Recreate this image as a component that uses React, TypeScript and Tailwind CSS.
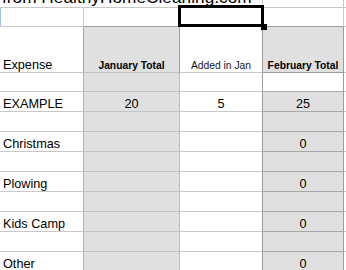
const rows = [
  { label: "", jan: "", added: "", feb: "", h: "h-[19px]", febWhite: true },
  { label: "EXAMPLE", jan: "20", added: "5", feb: "25", h: "h-5" },
  { label: "", jan: "", added: "", feb: "", h: "h-5" },
  { label: "Christmas", jan: "", added: "", feb: "0", h: "h-5" },
  { label: "", jan: "", added: "", feb: "", h: "h-5" },
  { label: "Plowing", jan: "", added: "", feb: "0", h: "h-5" },
  { label: "", jan: "", added: "", feb: "", h: "h-5" },
  { label: "Kids Camp", jan: "", added: "", feb: "0", h: "h-5" },
  { label: "", jan: "", added: "", feb: "", h: "h-5" },
  { label: "Other", jan: "", added: "", feb: "0", h: "h-5" },
];

const body = "flex items-end pb-0 text-[12.7px] leading-[14px] text-black";

export default function App() {
  return (
    <div className="relative h-[270px] w-[346px] overflow-hidden bg-white font-['Liberation_Sans',Arial,sans-serif]">
      <div className="grid grid-cols-[84px_96px_83px_81px_1fr]">
        {/* title row, text runs across the first three columns */}
        <div className="col-span-3 flex h-2 items-end overflow-visible border-r border-b border-[#c8c8c8] pb-px pl-[2px]">
          <span className="whitespace-nowrap text-[17.3px] leading-[17px] text-black">
            from HealthyHomeCleaning.com
          </span>
        </div>
        <div className="h-2 border-r border-b border-[#c8c8c8] bg-white" />
        <div className="h-2 border-b border-[#c8c8c8] bg-white" />

        {/* empty row with the selected cell */}
        <div className="h-[19px] border-r border-b border-[#c8c8c8] bg-white shadow-[inset_1px_0_0_#9fc3ee]" />
        <div className="h-[19px] border-r border-b border-r-[#c8c8c8] border-b-[#9c9c9c] bg-white" />
        <div className="h-[19px] border-r border-b border-r-[#c8c8c8] border-b-[#9c9c9c] bg-white" />
        <div className="h-[19px] border-r border-b border-r-[#c8c8c8] border-b-[#9c9c9c] bg-white" />
        <div className="h-[19px] border-b border-[#c8c8c8] bg-white" />

        {/* header row */}
        <div className={`h-[46px] border-r border-b border-r-[#a8a8a8] border-b-[#c8c8c8] bg-white pl-[3px] ${body}`}>
          Expense
        </div>
        <div className="flex h-[46px] items-end justify-center border-r border-b border-r-[#a0a0a0] border-b-[#c0c0c0] bg-[#e0e0e0] text-[10.3px] leading-[12px] font-bold text-black">
          January Total
        </div>
        <div className="flex h-[46px] items-end justify-center border-r border-b border-r-[#9c9c9c] border-b-[#c8c8c8] bg-white text-[10.3px] leading-[12px] text-[#16162a]">
          Added in Jan
        </div>
        <div className="flex h-[46px] items-end justify-center border-r border-b border-[#9c9c9c] bg-[#e0e0e0] text-[10.3px] leading-[12px] font-bold text-black">
          February Total
        </div>
        <div className="h-[46px] border-b border-[#c8c8c8] bg-white" />

        {rows.map((r, i) => (
          <div key={i} className="contents">
            <div className={`${r.h} border-r border-b border-r-[#b2b2b2] border-b-[#c8c8c8] bg-white pl-[3px] ${body}`}>
              {r.label}
            </div>
            <div className={`${r.h} justify-center border-r border-b border-r-[#bdbdbd] border-b-[#c4c4c4] bg-[#e0e0e0] ${body}`}>
              {r.jan}
            </div>
            <div className={`${r.h} justify-center border-r border-b border-r-[#9c9c9c] border-b-[#c8c8c8] bg-white ${body}`}>
              {r.added}
            </div>
            <div
              className={`${r.h} justify-center border-r border-b border-r-[#9c9c9c] border-b-[#a8a8a8] ${
                r.febWhite ? "bg-white" : "bg-[#e0e0e0]"
              } ${body}`}
            >
              {r.feb}
            </div>
            <div className={`${r.h} border-b border-[#c8c8c8] bg-white`} />
          </div>
        ))}
      </div>

      {/* active cell outline and fill handle */}
      <div className="absolute top-[5px] left-[178px] h-[22px] w-[86px] border-[3px] border-black" />
      <div className="absolute top-[24px] left-[261px] size-[6px] bg-black" />
    </div>
  );
}
